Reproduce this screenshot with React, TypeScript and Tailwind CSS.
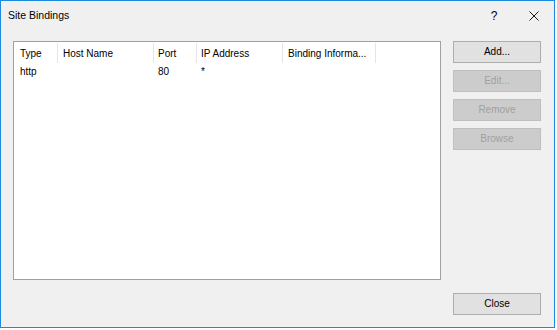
const columns = [
    { label: "Type", cls: "w-[44px] pl-[6px]" },
    { label: "Host Name", cls: "w-[96px] pl-[5px]" },
    { label: "Port", cls: "w-[43px] pl-[4px]" },
    { label: "IP Address", cls: "w-[86px] pl-[4px]" },
    { label: "Binding Informa...", cls: "w-[93px] pl-[5px]" },
];

const bindings = [{ type: "http", host: "", port: "80", ip: "*", info: "" }];

const sideButtons = [
    { label: "Add...", disabled: false },
    { label: "Edit...", disabled: true },
    { label: "Remove", disabled: true },
    { label: "Browse", disabled: true },
];

function DialogButton({ label, disabled }: { label: string; disabled?: boolean }) {
    return (
        <button
            disabled={disabled}
            className={
                disabled
                    ? "w-[88px] h-[22px] border border-[#bfbfbf] bg-[#cccccc] text-[#a0a0a0] leading-none"
                    : "w-[88px] h-[22px] border border-[#adadad] bg-[#e1e1e1] text-black leading-none"
            }
        >
            {label}
        </button>
    );
}

export default function App() {
    return (
        <div className="w-[557px] h-[330px] bg-white font-['Liberation_Sans',Arial,sans-serif] text-[10px] text-black">
            <div className="w-[555px] h-[328px] border border-[#1c8ae0] bg-[#f0f0f0] flex flex-col">
                {/* Title bar */}
                <div className="h-[30px] flex items-center pl-[7px] flex-shrink-0">
                    <span className="flex-1 text-[10.5px]">Site Bindings</span>
                    <span className="w-[20px] text-center text-[12px] mr-[25px]">?</span>
                    <svg width="10" height="10" viewBox="0 0 10 10" className="mr-[15px]">
                        <path d="M0.5 0.5 L9.5 9.5 M9.5 0.5 L0.5 9.5" stroke="#1a1a1a" strokeWidth="1" />
                    </svg>
                </div>

                {/* Body */}
                <div className="flex flex-1 pl-[12px] pt-[10px] pb-[12px]">
                    {/* List view */}
                    <div className="w-[428px] h-[239px] border border-[#a0a0a0] bg-white">
                        <div className="flex h-[21px]">
                            {columns.map(c => (
                                <div key={c.label} className={`${c.cls} h-[20px] mt-[1px] border-r border-[#e5e5e5] flex items-center`}>
                                    {c.label}
                                </div>
                            ))}
                        </div>
                        {bindings.map(b => (
                            <div key={b.type + b.port} className="flex h-[16px] items-center">
                                <div className="w-[44px] pl-[6px]">{b.type}</div>
                                <div className="w-[96px] pl-[5px]">{b.host}</div>
                                <div className="w-[43px] pl-[4px]">{b.port}</div>
                                <div className="w-[86px] pl-[4px]">{b.ip}</div>
                                <div className="w-[93px] pl-[5px]">{b.info}</div>
                            </div>
                        ))}
                    </div>

                    {/* Buttons */}
                    <div className="ml-[12px] flex flex-col justify-between">
                        <div className="flex flex-col gap-[7px]">
                            {sideButtons.map(b => (
                                <DialogButton key={b.label} label={b.label} disabled={b.disabled} />
                            ))}
                        </div>
                        <DialogButton label="Close" />
                    </div>
                </div>
            </div>
        </div>
    );
}
